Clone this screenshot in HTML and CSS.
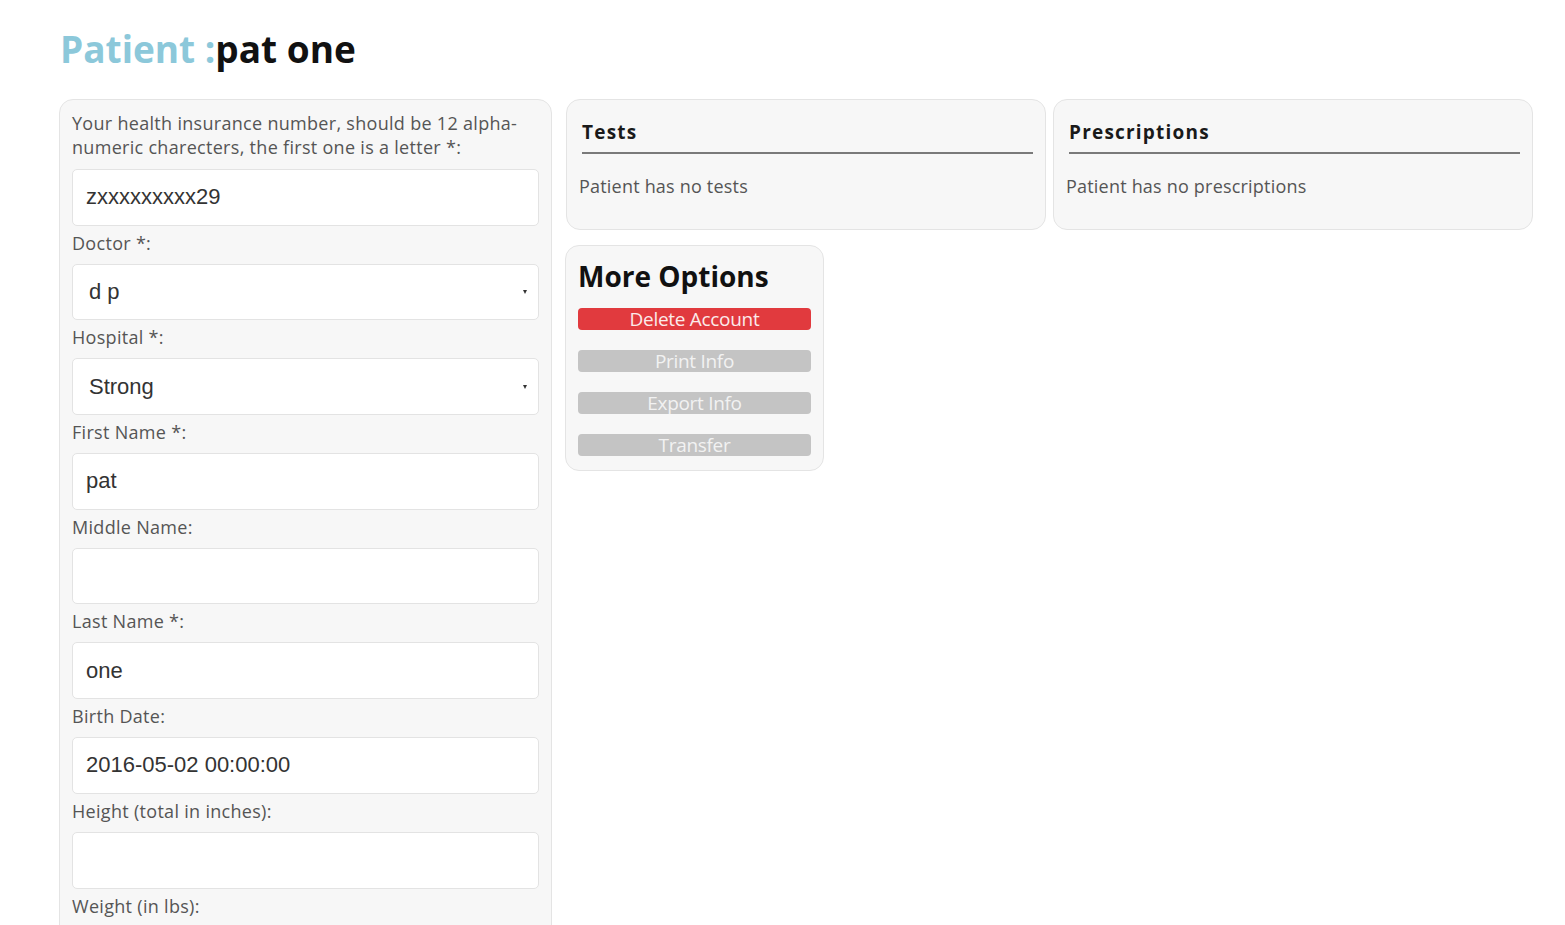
FILE: index.html
```html
<!DOCTYPE html>
<html>
<head>
<meta charset="utf-8">
<link rel="stylesheet" href="styles.css">
</head>
<body>
<h1 class="title"><span class="title-label">Patient :</span>pat one</h1>
<div class="layout">
  <div class="panel form-panel">
    <div class="label">Your health insurance number, should be 12 alpha-numeric charecters, the first one is a letter *:</div>
    <div class="field">zxxxxxxxxx29</div>
    <div class="label">Doctor *:</div>
    <div class="field select"><span>d p</span><span class="arrow"></span></div>
    <div class="label">Hospital *:</div>
    <div class="field select"><span>Strong</span><span class="arrow"></span></div>
    <div class="label">First Name *:</div>
    <div class="field">pat</div>
    <div class="label">Middle Name:</div>
    <div class="field"></div>
    <div class="label">Last Name *:</div>
    <div class="field">one</div>
    <div class="label">Birth Date:</div>
    <div class="field">2016-05-02 00:00:00</div>
    <div class="label">Height (total in inches):</div>
    <div class="field"></div>
    <div class="label">Weight (in lbs):</div>
    <div class="field"></div>
  </div>
  <div class="right">
    <div class="row">
      <div class="panel info-panel">
        <div class="info-head">Tests</div>
        <div class="info-text">Patient has no tests</div>
      </div>
      <div class="panel info-panel">
        <div class="info-head">Prescriptions</div>
        <div class="info-text">Patient has no prescriptions</div>
      </div>
    </div>
    <div class="panel options-panel">
      <div class="options-head">More Options</div>
      <div class="btn btn-red">Delete Account</div>
      <div class="btn">Print Info</div>
      <div class="btn">Export Info</div>
      <div class="btn">Transfer</div>
    </div>
  </div>
</div>
</body>
</html>
```
FILE: styles.css
```css
html, body {
  margin: 0;
  padding: 0;
  background: #ffffff;
  overflow: hidden;
  height: 925px;
}
body {
  font-family: "Open Sans", "Noto Sans", sans-serif;
  color: #555;
  padding-left: 59px;
}
.title {
  margin: 0;
  padding-top: 24px;
  height: 99px;
  box-sizing: border-box;
  font-size: 37px;
  line-height: 50px;
  font-weight: 700;
  color: #111;
  padding-left: 1px;
}
.title-label {
  color: #8cc8da;
}
.layout {
  display: flex;
  align-items: flex-start;
  gap: 14px;
}
.panel {
  background: #f7f7f7;
  border: 1px solid #e4e4e4;
  border-radius: 14px;
  box-sizing: border-box;
}
.form-panel {
  width: 493px;
  padding: 11px 12px 40px 12px;
  height: 1000px;
}
.label {
  font-size: 18px;
  line-height: 24px;
  color: #555;
  letter-spacing: 0.3px;
  padding-bottom: 10px;
}
.field + .label {
  padding-top: 5px;
  padding-bottom: 9px;
}
.field {
  height: 56.7px;
  box-sizing: border-box;
  background: #fff;
  border: 1px solid #e3e3e3;
  border-radius: 5px;
  font-family: "Liberation Sans", Arial, sans-serif;
  font-size: 22px;
  color: #333;
  padding: 0 13px;
  display: flex;
  align-items: center;
}
.select {
  padding-left: 16px;
  justify-content: space-between;
  padding-right: 11px;
}
.arrow {
  width: 0;
  height: 0;
  border-left: 2px solid transparent;
  border-right: 2px solid transparent;
  border-top: 4px solid #333;
}
.right {
  display: flex;
  flex-direction: column;
  gap: 15px;
}
.row {
  display: flex;
  gap: 7px;
}
.info-panel {
  width: 480px;
  height: 131px;
  padding: 18px 12px 0 12px;
}
.info-head {
  font-size: 19px;
  font-weight: 700;
  color: #1a1a1a;
  letter-spacing: 1.2px;
  line-height: 28px;
  margin-left: 3px;
  padding-bottom: 6px;
  border-bottom: 2px solid #7a7a7a;
}
.info-text {
  font-size: 18px;
  color: #555;
  letter-spacing: 0.2px;
  padding-top: 20px;
}
.options-panel {
  width: 259px;
  height: 226px;
  margin-left: -1px;
  padding: 10px 12px 0 12px;
}
.options-head {
  font-size: 28px;
  font-weight: 700;
  color: #111;
  line-height: 40px;
  margin-bottom: 12px;
}
.btn {
  height: 22px;
  background: #c4c4c4;
  color: #f2f2f2;
  border-radius: 4px;
  text-align: center;
  font-size: 19px;
  line-height: 22px;
  letter-spacing: -0.3px;
  margin-bottom: 20px;
}
.btn-red {
  background: #e13a3e;
  color: #fbeaea;
}
```
